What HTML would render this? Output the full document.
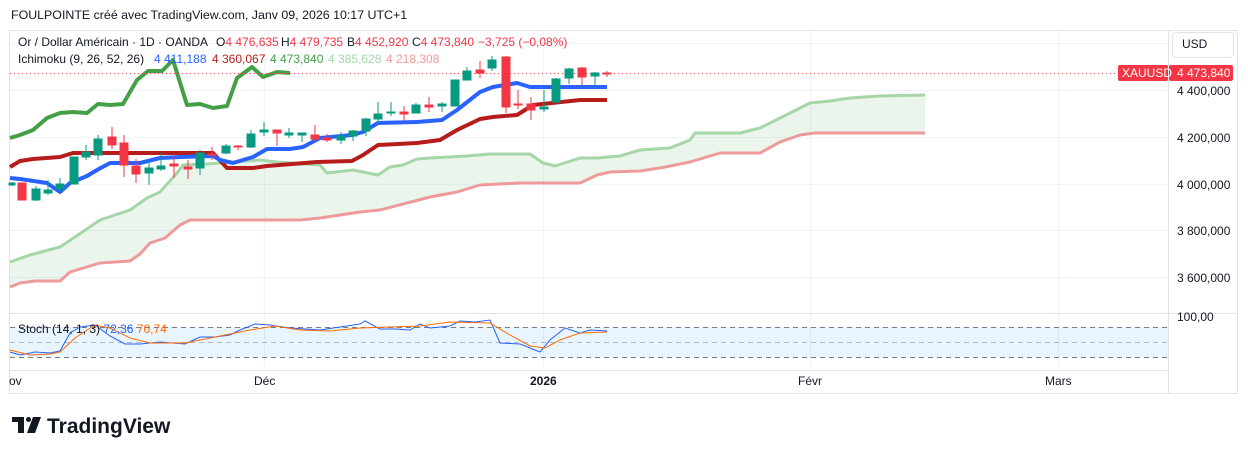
<!DOCTYPE html>
<html><head><meta charset="utf-8"><style>
html,body{margin:0;padding:0;background:#fff;width:1248px;height:455px;overflow:hidden;font-family:"Liberation Sans",sans-serif}
svg{position:absolute;left:0;top:0}
</style></head><body>
<svg width="1248" height="455" viewBox="0 0 1248 455" xmlns="http://www.w3.org/2000/svg" font-family="Liberation Sans, sans-serif">
<text x="11" y="19" font-size="12.4" fill="#131722">FOULPOINTE créé avec TradingView.com, Janv 09, 2026 10:17 UTC+1</text>
<rect x="9.5" y="30.5" width="1228" height="363" fill="none" stroke="#e0e3eb"/>
<line x1="1168.5" y1="31" x2="1168.5" y2="393" stroke="#e0e3eb"/>
<g stroke="#f0f3fa" stroke-width="1">
<line x1="10" y1="43.5" x2="1168" y2="43.5"/>
<line x1="10" y1="90.5" x2="1168" y2="90.5"/>
<line x1="10" y1="137.5" x2="1168" y2="137.5"/>
<line x1="10" y1="184.5" x2="1168" y2="184.5"/>
<line x1="10" y1="230.5" x2="1168" y2="230.5"/>
<line x1="10" y1="277.5" x2="1168" y2="277.5"/>
<line x1="264.5" y1="31" x2="264.5" y2="370"/>
<line x1="543.5" y1="31" x2="543.5" y2="370"/>
<line x1="810.5" y1="31" x2="810.5" y2="370"/>
<line x1="1058.5" y1="31" x2="1058.5" y2="370"/>
</g>
<line x1="10" y1="313.5" x2="1237" y2="313.5" stroke="#e0e3eb"/>
<polygon fill="#43a047" fill-opacity="0.1" points="10,262 30,255 60,247 75,237 100,220 130,210 147,198 160,192 177,173 183,165 207,164 260,160 277,162 320,165 327,173 353,170 378,175 390,167 403,165 417,159 430,158 467,156 490,154 530,154 543,163 555,166 580,158 597,158 620,156 640,150 670,148 690,140 695,133 740,133 760,128 790,113 810,103 830,101 850,98 880,96 925,95 925,133 815,133 800,135 780,142 760,153 720,153 690,162 660,168 640,171 610,172 597,175 580,183 520,183 480,185 457,192 430,197 380,210 360,212 340,215 320,218 300,220 190,220 180,225 165,238 150,243 140,254 130,261 100,263 70,272 60,281 35,281 20,283 10,287"/>
<polyline fill="none" stroke="#a5d6a7" stroke-width="3" stroke-linejoin="round" points="10,262 30,255 60,247 75,237 100,220 130,210 147,198 160,192 177,173 183,165 207,164 260,160 277,162 320,165 327,173 353,170 378,175 390,167 403,165 417,159 430,158 467,156 490,154 530,154 543,163 555,166 580,158 597,158 620,156 640,150 670,148 690,140 695,133 740,133 760,128 790,113 810,103 830,101 850,98 880,96 925,95"/>
<polyline fill="none" stroke="#ef9a9a" stroke-width="3" stroke-linejoin="round" points="10,287 20,283 35,281 60,281 70,272 100,263 130,261 140,254 150,243 165,238 180,225 190,220 300,220 320,218 340,215 360,212 380,210 430,197 457,192 480,185 520,183 580,183 597,175 610,172 640,171 660,168 690,162 720,153 760,153 780,142 800,135 815,133 925,133"/>
<polyline fill="none" stroke="#b71c1c" stroke-width="4" stroke-linejoin="round" points="10,167 20,161 33,159 60,157 73,153 213,153 227,168 253,168 267,166 317,162 352,161 363,155 378,145 417,143 440,140 457,130 480,119 493,117 517,115 533,105 580,100 607,100"/>
<polyline fill="none" stroke="#2962ff" stroke-width="4" stroke-linejoin="round" points="10,178 20,179 47,183 60,192 70,183 87,176 97,170 110,163 140,163 160,158 180,157 213,156 220,160 233,163 253,157 267,149 290,149 303,147 320,138 352,135 363,132 378,123 417,122 442,120 457,110 480,92 493,87 517,83 530,87 607,87"/>
<polyline fill="none" stroke="#43a047" stroke-width="4" stroke-linejoin="round" points="10,138 20,135 33,130 47,118 60,113 73,112 87,113 98,104 110,105 123,104 137,80 148,71 162,71 173,60 187,105 200,104 213,108 227,106 237,78 252,67 263,77 277,72 290,73"/>
<line x1="10" y1="73.5" x2="1118" y2="73.5" stroke="#f23645" stroke-dasharray="1 3"/>
<g stroke-width="1">
<g stroke="#089981" fill="#089981">
<line x1="12" y1="182" x2="12" y2="186"/><rect x="9" y="183" width="6" height="2"/>
<line x1="36" y1="186" x2="36" y2="201"/><rect x="32" y="189" width="8" height="11"/>
<line x1="48" y1="180" x2="48" y2="195"/><rect x="44" y="190" width="8" height="3"/>
<line x1="60" y1="178" x2="60" y2="192"/><rect x="56" y="184" width="8" height="5"/>
<line x1="74" y1="157" x2="74" y2="184"/><rect x="70" y="157" width="8" height="27"/>
<line x1="86" y1="145" x2="86" y2="160"/><rect x="82" y="152" width="8" height="5"/>
<line x1="98" y1="135" x2="98" y2="160"/><rect x="94" y="139" width="8" height="16"/>
<line x1="149" y1="160" x2="149" y2="185"/><rect x="145" y="168" width="8" height="5"/>
<line x1="161" y1="153" x2="161" y2="171"/><rect x="157" y="166" width="8" height="3"/>
<line x1="200" y1="150" x2="200" y2="175"/><rect x="196" y="153" width="8" height="15"/>
<line x1="226" y1="144" x2="226" y2="154"/><rect x="222" y="146" width="8" height="7"/>
<line x1="251" y1="130" x2="251" y2="148"/><rect x="247" y="134" width="8" height="13"/>
<line x1="264" y1="122" x2="264" y2="136"/><rect x="260" y="130" width="8" height="2"/>
<line x1="289" y1="128" x2="289" y2="138"/><rect x="285" y="133" width="8" height="2"/>
<line x1="302" y1="133" x2="302" y2="142"/><rect x="298" y="133" width="8" height="2"/>
<line x1="341" y1="132" x2="341" y2="144"/><rect x="337" y="136" width="8" height="4"/>
<line x1="353" y1="130" x2="353" y2="141"/><rect x="349" y="131" width="8" height="5"/>
<line x1="366" y1="118" x2="366" y2="136"/><rect x="362" y="119" width="8" height="12"/>
<line x1="378" y1="102" x2="378" y2="123"/><rect x="374" y="114" width="8" height="5"/>
<line x1="391" y1="102" x2="391" y2="116"/><rect x="387" y="112" width="8" height="1"/>
<line x1="416" y1="103" x2="416" y2="113"/><rect x="412" y="105" width="8" height="8"/>
<line x1="442" y1="102" x2="442" y2="112"/><rect x="438" y="104" width="8" height="2"/>
<line x1="455" y1="80" x2="455" y2="106"/><rect x="451" y="80" width="8" height="26"/>
<line x1="467" y1="67" x2="467" y2="80"/><rect x="463" y="71" width="8" height="9"/>
<line x1="492" y1="56" x2="492" y2="71"/><rect x="488" y="60" width="8" height="8"/>
<line x1="544" y1="90" x2="544" y2="112"/><rect x="540" y="107" width="8" height="2"/>
<line x1="556" y1="78" x2="556" y2="103"/><rect x="552" y="79" width="8" height="23"/>
<line x1="569" y1="68" x2="569" y2="84"/><rect x="565" y="69" width="8" height="9"/>
<line x1="595" y1="72" x2="595" y2="88"/><rect x="591" y="73" width="8" height="3"/>
</g>
<g stroke="#f23645" fill="#f23645">
<line x1="22" y1="183" x2="22" y2="200"/><rect x="18" y="183" width="8" height="17"/>
<line x1="112" y1="127" x2="112" y2="149"/><rect x="108" y="137" width="8" height="8"/>
<line x1="124" y1="135" x2="124" y2="177"/><rect x="120" y="143" width="8" height="22"/>
<line x1="136" y1="159" x2="136" y2="183"/><rect x="132" y="166" width="8" height="8"/>
<line x1="174" y1="156" x2="174" y2="178"/><rect x="170" y="164" width="8" height="2"/>
<line x1="188" y1="160" x2="188" y2="179"/><rect x="184" y="167" width="8" height="2"/>
<line x1="212" y1="147" x2="212" y2="160"/><rect x="208" y="154" width="8" height="1"/>
<line x1="238" y1="145" x2="238" y2="150"/><rect x="234" y="146" width="8" height="1"/>
<line x1="277" y1="130" x2="277" y2="146"/><rect x="273" y="130" width="8" height="3"/>
<line x1="315" y1="125" x2="315" y2="141"/><rect x="311" y="135" width="8" height="4"/>
<line x1="327" y1="134" x2="327" y2="142"/><rect x="323" y="138" width="8" height="2"/>
<line x1="404" y1="106" x2="404" y2="121"/><rect x="400" y="112" width="8" height="2"/>
<line x1="429" y1="97" x2="429" y2="112"/><rect x="425" y="105" width="8" height="2"/>
<line x1="480" y1="61" x2="480" y2="78"/><rect x="476" y="70" width="8" height="3"/>
<line x1="506" y1="56" x2="506" y2="113"/><rect x="502" y="57" width="8" height="50"/>
<line x1="518" y1="90" x2="518" y2="109"/><rect x="514" y="104" width="8" height="1"/>
<line x1="531" y1="97" x2="531" y2="120"/><rect x="527" y="104" width="8" height="6"/>
<line x1="582" y1="67" x2="582" y2="85"/><rect x="578" y="68" width="8" height="9"/>
<line x1="607" y1="71" x2="607" y2="77"/><rect x="603" y="73" width="8" height="1"/>
</g>
</g>
<g font-size="12" fill="#131722">
<text x="18" y="46">Or / Dollar Américain · 1D · OANDA</text>
<text x="216" y="46">O<tspan fill="#f23645">4 476,635</tspan></text>
<text x="281" y="46">H<tspan fill="#f23645">4 479,735</tspan></text>
<text x="347" y="46">B<tspan fill="#f23645">4 452,920</tspan></text>
<text x="412" y="46">C<tspan fill="#f23645">4 473,840</tspan></text>
<text x="478" y="46" fill="#f23645">−3,725 (−0,08%)</text>
<text x="18" y="63">Ichimoku (9, 26, 52, 26)</text>
<text x="154" y="63" fill="#2962ff">4 411,188</text>
<text x="212" y="63" fill="#b71c1c">4 360,067</text>
<text x="270" y="63" fill="#43a047">4 473,840</text>
<text x="328" y="63" fill="#a5d6a7">4 385,628</text>
<text x="386" y="63" fill="#ef9a9a">4 218,308</text>
</g>
<rect x="1172.5" y="32.5" width="61" height="25" rx="4" fill="#fff" stroke="#e0e3eb"/>
<text x="1182" y="48" font-size="12" fill="#131722">USD</text>
<rect x="1118" y="65" width="50" height="16" rx="2" fill="#f23645"/>
<rect x="1169" y="65" width="64" height="16" rx="2" fill="#f23645"/>
<text x="1122" y="77" font-size="12" fill="#fff">XAUUSD</text>
<text x="1177" y="77" font-size="12" fill="#fff">4 473,840</text>
<g font-size="12" fill="#131722">
<text x="1177" y="95">4 400,000</text>
<text x="1177" y="142">4 200,000</text>
<text x="1177" y="189">4 000,000</text>
<text x="1177" y="235">3 800,000</text>
<text x="1177" y="282">3 600,000</text>
<text x="1177" y="321">100,00</text>
</g>
<rect x="10" y="327" width="1158" height="30" fill="#2196f3" fill-opacity="0.1"/>
<g stroke="#787b86" stroke-dasharray="5 4" stroke-width="1">
<line x1="10" y1="327.5" x2="1168" y2="327.5"/>
<line x1="10" y1="342.5" x2="1168" y2="342.5" stroke-opacity="0.5"/>
<line x1="10" y1="357.5" x2="1168" y2="357.5"/>
</g>
<polyline fill="none" stroke="#2962ff" stroke-width="1" points="10,352 20,355 35,352 50,353 60,351 70,333 80,327 95,325 110,336 125,344 140,344 160,342 185,344 200,337 215,337 230,335 240,330 255,324 270,325 290,328 320,330 340,327 360,324 365,321 380,329 395,329 410,330 420,324 430,328 450,326 460,321 475,322 490,320 500,343 520,344 540,352 550,340 565,328 580,333 590,330 607,331"/>
<polyline fill="none" stroke="#ff6d00" stroke-width="1" points="10,350 30,355 50,354 60,352 75,338 95,325 110,328 130,338 150,343 185,343 200,340 230,334 250,330 275,326 300,330 330,331 360,328 390,327 420,326 450,322 490,323 510,335 530,346 545,348 560,340 580,333 607,332"/>
<text x="18" y="333" font-size="12" fill="#131722">Stoch (14, 1, 3) <tspan fill="#2962ff">72,36</tspan> <tspan fill="#ff6d00">70,74</tspan></text>
<line x1="10" y1="370.5" x2="1168" y2="370.5" stroke="#e0e3eb"/>
<g font-size="12" fill="#131722">
<text x="9" y="385">ov</text>
<text x="254" y="385">Déc</text>
<text x="530" y="385" font-weight="bold">2026</text>
<text x="798" y="385">Févr</text>
<text x="1045" y="385">Mars</text>
</g>
<g fill="#131722">
<path d="M12 417 H24 V433 H18 V422 H12 Z"/>
<circle cx="28.5" cy="419.5" r="2.5"/>
<path d="M33 417 H41 L35 433 H27 Z"/>
</g>
<text x="47" y="433" font-size="21" font-weight="bold" fill="#131722">TradingView</text>
</svg>
</body></html>
